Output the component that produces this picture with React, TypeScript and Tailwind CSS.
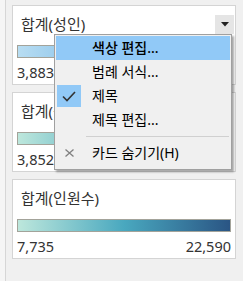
import React from "react";

const font = { fontFamily: '"Noto Sans", "Noto Sans CJK KR", sans-serif' };

function Card({
  title,
  min,
  max,
  barClass,
  dropdown,
}: {
  title: string;
  min: string;
  max: string;
  barClass: string;
  dropdown?: boolean;
}) {
  return (
    <div className="h-[80px] border border-[#d4d4d4] bg-white px-[4px] pt-[8px] flex flex-col">
      <div className="h-[20px] flex items-center justify-between">
        <span className="pl-[4px] text-[15px] leading-[20px] text-[#333]">{title}</span>
        {dropdown && (
          <div className="w-[19px] h-[19px] bg-[#e5e5e5] flex items-center justify-center mr-[-3px]">
            <svg width="8" height="5" viewBox="0 0 8 5">
              <path d="M0 0 L8 0 L4 4.5 Z" fill="#222" />
            </svg>
          </div>
        )}
      </div>
      <div className={`mt-[11px] h-[13px] border border-[#a3a39a] ${barClass}`} />
      <div className="mt-[6px] flex justify-between text-[14.5px] leading-[16px] text-[#333]">
        <span>{min}</span>
        <span>{max}</span>
      </div>
    </div>
  );
}

function MenuItem({
  label,
  icon,
  active,
  bold,
}: {
  label: string;
  icon?: React.ReactNode;
  active?: boolean;
  bold?: boolean;
}) {
  return (
    <div className={`h-[24px] flex items-center ${active ? "bg-[#91c9f7]" : ""}`}>
      <div className="ml-[1px] w-[24px] h-[22px] flex items-center justify-center">{icon}</div>
      <span
        className={`ml-[11px] text-[14px] leading-[20px] text-black ${bold ? "font-medium" : ""}`}
      >
        {label}
      </span>
    </div>
  );
}

export default function App() {
  return (
    <div className="relative w-[243px] h-[281px] bg-[#f0f0f0] flex overflow-hidden" style={font}>
      <div className="w-[5px] h-full bg-[#f5f5f5]" />
      <div className="w-[1px] h-full bg-[#d6d6d6]" />
      <div className="ml-[6px] w-[224px] pt-[5px] flex flex-col gap-[7px]">
        <Card
          title="합계(성인)"
          min="3,883"
          max=""
          dropdown
          barClass="bg-[linear-gradient(to_right,#b8ddf2,#8cc4ea_30%,#2f6fae)]"
        />
        <Card
          title="합계(성인)"
          min="3,852"
          max=""
          barClass="bg-[linear-gradient(to_right,#bde7dc,#49a8bf_50%,#2a5584)]"
        />
        <Card
          title="합계(인원수)"
          min="7,735"
          max="22,590"
          barClass="bg-[linear-gradient(to_right,#bde7dc,#49a8bf_50%,#2a5584)]"
        />
      </div>

      {/* context menu */}
      <div className="absolute left-[54px] top-[34px] w-[178px] h-[136px] bg-[#f0f0f0] border border-[#a0a0a0] shadow-[2px_2px_2px_rgba(0,0,0,0.35)] px-[1px] pt-[1px]">
        <MenuItem label="색상 편집..." active bold />
        <MenuItem label="범례 서식..." />
        <MenuItem
          label="제목"
          icon={
            <div className="w-[24px] h-[22px] bg-[#91c9f7] flex items-center justify-center">
              <svg width="14" height="11" viewBox="0 0 14 11">
                <path d="M1 5.5 L5 9.5 L13 1" fill="none" stroke="#333" strokeWidth="1.6" />
              </svg>
            </div>
          }
        />
        <MenuItem label="제목 편집..." />
        <div className="h-[9px] pt-[4px]">
          <div className="ml-[30px] mr-[1px] h-[1px] bg-[#d0d0d0]" />
        </div>
        <MenuItem
          label="카드 숨기기(H)"
          icon={
            <svg width="9" height="8" viewBox="0 0 9 8">
              <path d="M0.5 0.5 L8.5 7.5 M8.5 0.5 L0.5 7.5" stroke="#808080" strokeWidth="1.3" />
            </svg>
          }
        />
      </div>
    </div>
  );
}
